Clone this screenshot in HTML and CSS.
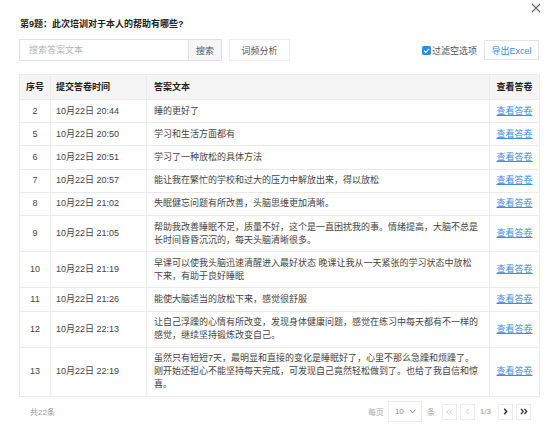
FILE: index.html
```html
<!DOCTYPE html>
<html lang="zh-CN">
<head>
<meta charset="utf-8">
<title>第9题</title>
<link rel="stylesheet" href="styles.css">
</head>
<body>
<div class="dialog">
  <button class="close" aria-label="关闭">
    <svg width="10" height="10" viewBox="0 0 10 10"><path d="M1 1L9 9M9 1L1 9" stroke="#666" stroke-width="1.1" fill="none"/></svg>
  </button>
  <div class="title">第9题：此次培训对于本人的帮助有哪些?</div>
  <div class="toolbar">
    <div class="search">
      <input class="search-input" type="text" placeholder="搜索答案文本">
      <button class="search-btn">搜索</button>
    </div>
    <button class="btn freq">词频分析</button>
    <div class="spacer"></div>
    <label class="filter">
      <svg class="check" width="9" height="9" viewBox="0 0 9 9"><rect x="0" y="0" width="9" height="9" rx="1.8" fill="#2b8cf0"/><path d="M2 4.6L3.8 6.3L7 2.8" stroke="#fff" stroke-width="1.2" fill="none"/></svg>
      过滤空选项
    </label>
    <button class="btn export">导出Excel</button>
  </div>
  <table class="answers">
    <thead>
      <tr><th class="c-no">序号</th><th class="c-time">提交答卷时间</th><th class="c-text">答案文本</th><th class="c-view">查看答卷</th></tr>
    </thead>
    <tbody>
      <tr><td class="c-no">2</td><td class="c-time">10月22日 20:44</td><td class="c-text">睡的更好了</td><td class="c-view"><a href="#">查看答卷</a></td></tr>
      <tr><td class="c-no">5</td><td class="c-time">10月22日 20:50</td><td class="c-text">学习和生活方面都有</td><td class="c-view"><a href="#">查看答卷</a></td></tr>
      <tr><td class="c-no">6</td><td class="c-time">10月22日 20:51</td><td class="c-text">学习了一种放松的具体方法</td><td class="c-view"><a href="#">查看答卷</a></td></tr>
      <tr><td class="c-no">7</td><td class="c-time">10月22日 20:57</td><td class="c-text">能让我在繁忙的学校和过大的压力中解放出来，得以放松</td><td class="c-view"><a href="#">查看答卷</a></td></tr>
      <tr><td class="c-no">8</td><td class="c-time">10月22日 21:02</td><td class="c-text">失眠健忘问题有所改善，头脑思维更加清晰。</td><td class="c-view"><a href="#">查看答卷</a></td></tr>
      <tr><td class="c-no">9</td><td class="c-time">10月22日 21:05</td><td class="c-text">帮助我改善睡眠不足，质量不好，这个是一直困扰我的事。情绪提高，大脑不总是长时间昏昏沉沉的，每天头脑清晰很多。</td><td class="c-view"><a href="#">查看答卷</a></td></tr>
      <tr><td class="c-no">10</td><td class="c-time">10月22日 21:19</td><td class="c-text">早课可以使我头脑迅速清醒进入最好状态 晚课让我从一天紧张的学习状态中放松下来，有助于良好睡眠</td><td class="c-view"><a href="#">查看答卷</a></td></tr>
      <tr><td class="c-no">11</td><td class="c-time">10月22日 21:26</td><td class="c-text">能使大脑适当的放松下来，感觉很舒服</td><td class="c-view"><a href="#">查看答卷</a></td></tr>
      <tr><td class="c-no">12</td><td class="c-time">10月22日 22:13</td><td class="c-text">让自己浮躁的心情有所改变，发现身体健康问题，感觉在练习中每天都有不一样的感觉，继续坚持锻炼改变自己。</td><td class="c-view"><a href="#">查看答卷</a></td></tr>
      <tr><td class="c-no">13</td><td class="c-time">10月22日 22:19</td><td class="c-text">虽然只有短短7天，最明显和直接的变化是睡眠好了，心里不那么急躁和烦躁了。刚开始还担心不能坚持每天完成，可发现自己竟然轻松做到了。也给了我自信和惊喜。</td><td class="c-view"><a href="#">查看答卷</a></td></tr>
    </tbody>
  </table>
  <div class="footer">
    <span class="total">共22条</span>
    <div class="spacer"></div>
    <span class="muted">每页</span>
    <div class="select">
      <span>10</span>
      <svg width="7" height="5" viewBox="0 0 7 5"><path d="M0.7 0.8L3.5 3.8L6.3 0.8" stroke="#888" stroke-width="1" fill="none"/></svg>
    </div>
    <span class="muted">条</span>
    <button class="pg first disabled" aria-label="首页">
      <svg width="7" height="6" viewBox="0 0 7 6"><path d="M3.2 0.6L0.8 3L3.2 5.4M6.2 0.6L3.8 3L6.2 5.4" stroke="#c8c8c8" stroke-width="0.9" fill="none"/></svg>
    </button>
    <button class="pg disabled" aria-label="上一页">
      <svg width="5" height="7" viewBox="0 0 5 7"><path d="M3.6 0.8L1.2 3.5L3.6 6.2" stroke="#c8c8c8" stroke-width="0.9" fill="none"/></svg>
    </button>
    <span class="pageinfo">1/3</span>
    <button class="pg" aria-label="下一页">
      <svg width="5" height="7" viewBox="0 0 5 7"><path d="M1.2 0.8L3.6 3.5L1.2 6.2" stroke="#333" stroke-width="1.5" fill="none"/></svg>
    </button>
    <button class="pg" aria-label="末页">
      <svg width="8" height="7" viewBox="0 0 8 7"><path d="M0.9 0.8L3.2 3.5L0.9 6.2M4.4 0.8L6.7 3.5L4.4 6.2" stroke="#333" stroke-width="1.3" fill="none"/></svg>
    </button>
  </div>
</div>
</body>
</html>
```
FILE: styles.css
```css
* { box-sizing: border-box; }
html, body { margin: 0; padding: 0; background: #fff; }
body {
  font-family: "Liberation Sans", "Noto Sans CJK SC", sans-serif;
  font-size: 9px;
  color: #333;
}
.dialog {
  position: relative;
  width: 554px;
  height: 435px;
  padding: 18px 15px 0 19px;
}
.close {
  position: absolute;
  top: 2px;
  right: 12px;
  width: 12px;
  height: 12px;
  padding: 1px;
  border: 0;
  background: transparent;
  display: flex;
  align-items: center;
  justify-content: center;
}
.title {
  font-weight: bold;
  line-height: 13px;
  padding-left: 1px;
  color: #222;
}
.toolbar {
  margin-top: 8px;
  height: 22px;
  display: flex;
  align-items: center;
}
.search {
  display: flex;
  height: 22px;
}
.search-input {
  width: 169px;
  height: 22px;
  border: 1px solid #e0e0e0;
  border-right: 0;
  padding: 0 9px;
  font: inherit;
  outline: none;
}
.search-input::placeholder { color: #b5b5b5; }
.search-btn {
  width: 34px;
  height: 22px;
  border: 1px solid #e0e0e0;
  background: #f6f6f6;
  font: inherit;
  color: #555;
  padding: 0;
}
.btn {
  height: 22px;
  border: 1px solid #ececec;
  background: #fff;
  font: inherit;
  color: #555;
  padding: 0;
}
.freq { width: 61px; margin-left: 7px; }
.spacer { flex: 1; }
.filter {
  display: flex;
  align-items: center;
  gap: 1px;
  color: #555;
  margin-right: 7px;
}
.check { display: block; }
.export {
  width: 55px;
  height: 20px;
  color: #3a8ee6;
  border-color: #e3e3e3;
}
.answers {
  margin-top: 13px;
  width: 520px;
  border-collapse: collapse;
  table-layout: fixed;
  border: 1px solid #ebebeb;
}
.answers th, .answers td {
  border: 1px solid #ebebeb;
  line-height: 13px;
  text-align: left;
  vertical-align: middle;
}
.answers th {
  background: #f5f5f5;
  font-weight: bold;
  color: #222;
  padding: 5.5px 6px;
}
.answers td {
  padding: 4.6px 6px;
  color: #444;
}
.answers .c-no { width: 31px; text-align: center; padding-left: 2px; padding-right: 2px; }
.answers .c-time { width: 96px; padding-left: 5px; }
.answers .c-text { width: 343px; padding-left: 7px; padding-right: 9px; }
.answers .c-view { width: 50px; text-align: center; padding-left: 2px; padding-right: 2px; }
.answers a { color: #3d8fe3; text-decoration: underline; }
.footer {
  margin-top: 4px;
  height: 22px;
  display: flex;
  align-items: center;
  padding-right: 8px;
  font-size: 8px;
}
.total { color: #999; padding-left: 11px; }
.muted { color: #aaa; }
.select {
  width: 34px;
  height: 21px;
  border: 1px solid #ececec;
  margin: 0 5px 0 4px;
  display: flex;
  align-items: center;
  justify-content: space-between;
  padding: 0 5px 0 6px;
  color: #888;
}
.pg {
  width: 15px;
  height: 16px;
  border: 1px solid #ececec;
  background: #fff;
  padding: 0;
  display: flex;
  align-items: center;
  justify-content: center;
  margin-left: 3px;
}
.pg.first { margin-left: 7px; }
.pageinfo { color: #999; margin: 0 4px 0 5px; }
```
